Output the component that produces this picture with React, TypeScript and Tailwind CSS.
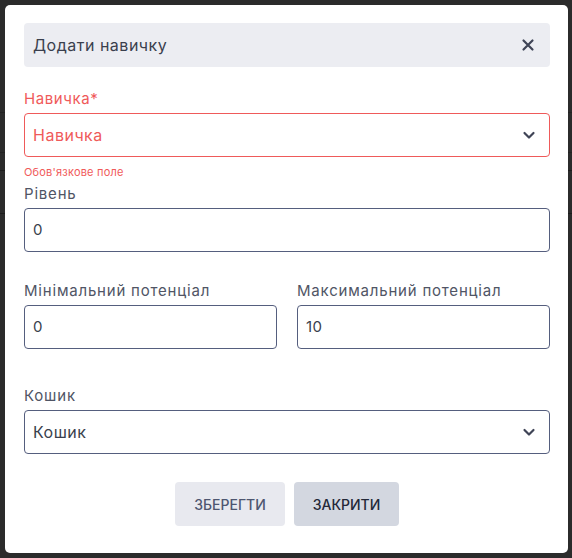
import React from 'react';

// Overlay + "add skill" modal

function Chevron() {
  return (
    <svg width="16" height="16" viewBox="0 0 16 16" fill="none" className="text-[#3f4456]">
      <path d="M3.5 6l4.5 4.5 4.5-4.5" stroke="currentColor" strokeWidth="2.2" strokeLinecap="round" strokeLinejoin="round" />
    </svg>
  );
}

function Field({ label, value, className = '' }: { label: string; value: string; className?: string }) {
  return (
    <div className={`flex flex-col ${className}`}>
      <label className="text-[15px] leading-[18px] tracking-[0.8px] text-[#505565] mb-[5px]">{label}</label>
      <div className="h-[44px] border border-[#555e7e] rounded-[4px] flex items-center px-[8px] text-[15px] tracking-[0.5px] text-[#3a3f4d]">
        {value}
      </div>
    </div>
  );
}

export default function App() {
  return (
    <div
      className="w-[572px] h-[558px] bg-[#2b2b2b] relative overflow-hidden"
      style={{ fontFamily: 'Inter, "Noto Sans", sans-serif' }}
    >
      {/* faint table behind the overlay */}
      <div className="absolute left-0 right-0 top-[170px] h-px bg-[#1c1c1c]" />
      <div className="absolute left-0 right-0 top-[213px] h-px bg-[#1c1c1c]" />
      <div className="absolute left-0 right-0 top-[112px] h-px bg-[#222]" />
      <div className="absolute left-0 right-0 top-[152px] h-px bg-[#222]" />

      <div className="absolute left-[5px] top-[5px] w-[563px] h-[548px] bg-white rounded-[5px] pl-[19px] pr-[18px] pt-[18px]">
        <div className="h-[44px] bg-[#ecedf2] rounded-[4px] flex items-center justify-between px-[9px]">
          <span className="text-[16px] tracking-[0.5px] text-[#3a3f4d]">Додати навичку</span>
          <svg width="14" height="14" viewBox="0 0 14 14" className="mr-[6px] text-[#3f4456]">
            <path d="M2.5 2.5l9 9M11.5 2.5l-9 9" stroke="currentColor" strokeWidth="2.2" strokeLinecap="round" />
          </svg>
        </div>

        <div className="mt-[23px] flex flex-col">
          <label className="text-[15px] leading-[18px] tracking-[0.6px] text-[#f05a5a] mb-[5px]">Навичка*</label>
          <div className="h-[44px] border border-[#ef5a5a] rounded-[4px] flex items-center justify-between px-[8px] pr-[12px]">
            <span className="text-[16px] tracking-[0.5px] text-[#ef5a5a]">Навичка</span>
            <Chevron />
          </div>
          <span className="text-[11px] leading-[14px] tracking-[0.2px] text-[#f05a5a] mt-[8px]">Обов'язкове поле</span>
        </div>

        <Field label="Рівень" value="0" className="mt-[6px]" />

        <div className="mt-[30px] grid grid-cols-2 gap-[20px]">
          <Field label="Мінімальний потенціал" value="0" />
          <Field label="Максимальний потенціал" value="10" />
        </div>

        <div className="mt-[38px] flex flex-col">
          <label className="text-[15px] leading-[18px] tracking-[0.8px] text-[#505565] mb-[5px]">Кошик</label>
          <div className="h-[44px] border border-[#555e7e] rounded-[4px] flex items-center justify-between px-[8px] pr-[12px]">
            <span className="text-[16px] tracking-[0.5px] text-[#3a3f4d]">Кошик</span>
            <Chevron />
          </div>
        </div>

        <div className="mt-[28px] flex justify-center gap-[9px]">
          <button className="w-[110px] h-[44px] rounded-[4px] bg-[#e8e9ef] text-[#4e5670] text-[14px] font-medium">
            ЗБЕРЕГТИ
          </button>
          <button className="w-[105px] h-[44px] rounded-[4px] bg-[#d3d7e0] text-[#232838] text-[14px] font-medium">
            ЗАКРИТИ
          </button>
        </div>
      </div>
    </div>
  );
}
